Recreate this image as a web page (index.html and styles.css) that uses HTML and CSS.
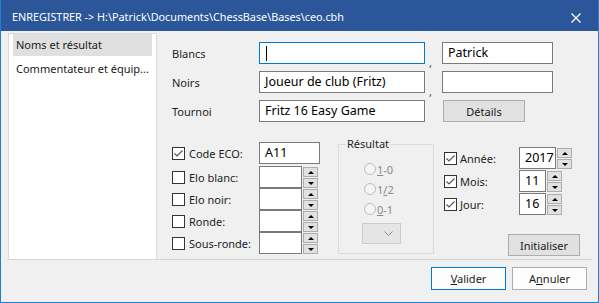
FILE: index.html
```html
<!DOCTYPE html>
<html lang="fr">
<head>
  <meta charset="UTF-8">
  <title>Enregistrer</title>
  <link rel="stylesheet" href="styles.css">
</head>
<body>
  <div class="window">
    <div class="titlebar">
      <span class="title">ENREGISTRER -&gt; H:\Patrick\Documents\ChessBase\Bases\ceo.cbh</span>
      <svg class="close" width="10" height="10" viewBox="0 0 10 10">
        <path d="M0.5 0.5 L9.5 9.5 M9.5 0.5 L0.5 9.5" stroke="#fff" stroke-width="1.3"/>
      </svg>
    </div>

    <div class="main">
      <ul class="nav">
        <li class="active">Noms et résultat</li>
        <li>Commentateur et équip...</li>
      </ul>

      <div class="form">
        <div class="names">
          <span class="label">Blancs</span>
          <div class="field focus"><span class="caret"></span></div>
          <span class="comma">,</span>
          <div class="field short">Patrick</div>

          <span class="label">Noirs</span>
          <div class="field">Joueur de club (Fritz)</div>
          <span class="comma">,</span>
          <div class="field short"></div>

          <span class="label">Tournoi</span>
          <div class="field">Fritz 16 Easy Game</div>
          <span></span>
          <button class="btn details">Détails</button>
        </div>

        <div class="lower">
          <div class="checks">
            <div class="row eco-row">
              <span class="check on"></span><span class="label">Code ECO:</span>
              <div class="field eco">A11</div>
            </div>
            <div class="row">
              <span class="check"></span><span class="label">Elo blanc:</span>
              <div class="spin"><div class="field"></div><div class="arrows"><span class="up"></span><span class="down"></span></div></div>
            </div>
            <div class="row">
              <span class="check"></span><span class="label">Elo noir:</span>
              <div class="spin"><div class="field"></div><div class="arrows"><span class="up"></span><span class="down"></span></div></div>
            </div>
            <div class="row">
              <span class="check"></span><span class="label">Ronde:</span>
              <div class="spin"><div class="field"></div><div class="arrows"><span class="up"></span><span class="down"></span></div></div>
            </div>
            <div class="row">
              <span class="check"></span><span class="label">Sous-ronde:</span>
              <div class="spin"><div class="field"></div><div class="arrows"><span class="up"></span><span class="down"></span></div></div>
            </div>
          </div>

          <fieldset class="result">
            <legend>Résultat</legend>
            <div class="radio"><span class="dot"></span><span><u>1</u>-0</span></div>
            <div class="radio"><span class="dot"></span><span>1<u>/</u>2</span></div>
            <div class="radio"><span class="dot"></span><span><u>0</u>-1</span></div>
            <div class="combo">
              <svg width="9" height="5" viewBox="0 0 9 5"><path d="M0.5 0.5 L4.5 4.5 L8.5 0.5" fill="none" stroke="#8a8a8a"/></svg>
            </div>
          </fieldset>

          <div class="dates">
            <div class="row">
              <span class="check on"></span><span class="label">Année:</span>
              <div class="spin"><div class="field year">2017</div><div class="arrows"><span class="up"></span><span class="down"></span></div></div>
            </div>
            <div class="row">
              <span class="check on"></span><span class="label">Mois:</span>
              <div class="spin"><div class="field day">11</div><div class="arrows"><span class="up"></span><span class="down"></span></div></div>
            </div>
            <div class="row">
              <span class="check on"></span><span class="label">Jour:</span>
              <div class="spin"><div class="field day">16</div><div class="arrows"><span class="up"></span><span class="down"></span></div></div>
            </div>
            <button class="btn reset">Initialiser</button>
          </div>
        </div>
      </div>
    </div>

    <div class="footer">
      <button class="btn action primary"><u>V</u>alider</button>
      <button class="btn action">A<u>n</u>nuler</button>
    </div>
  </div>
</body>
</html>
```

FILE: styles.css
```css
body {
  margin: 0;
  font-family: "Noto Sans", "Liberation Sans", sans-serif;
  font-size: 11px;
  color: #1a1a1a;
}
.window {
  width: 599px;
  height: 303px;
  box-sizing: border-box;
  border: 1px solid #1f7fd6;
  border-top: none;
  background-color: #f0f0f0;
  overflow: hidden;
}
.titlebar {
  height: 31px;
  background-color: #2b579a;
  color: #fff;
  display: flex;
  align-items: center;
  justify-content: space-between;
  padding: 0 17px 0 11px;
  font-size: 10.8px;
}
.title {
  margin-top: 1px;
}
.close {
  margin-top: 4px;
}
.main {
  margin: 0 6px;
  height: 228px;
  display: flex;
  border-bottom: 1px solid #d5d5d5;
}
.nav {
  list-style: none;
  margin: 2px 0 0 1px;
  padding: 0;
  width: 149px;
  box-sizing: border-box;
  background-color: #fff;
  border: 1px solid #dadada;
  border-bottom: none;
}
.nav li {
  height: 22px;
  line-height: 22px;
  margin: 0 4px 2px;
  padding-left: 3px;
}
.nav li.active {
  background-color: #e0e0e0;
}
.form {
  padding: 11px 0 0 15px;
}
.names {
  display: grid;
  grid-template-columns: 87px 166px 17px 111px;
  grid-auto-rows: 22px;
  row-gap: 7px;
}
.label {
  align-self: center;
  color: #1e1e1e;
}
.field {
  box-sizing: border-box;
  height: 22px;
  border: 1px solid #7a7a7a;
  background-color: #fff;
  padding-left: 5px;
  font-size: 12.5px;
  line-height: 20px;
  color: #000;
}
.field.focus {
  border-color: #0078d7;
  padding-left: 6px;
  display: flex;
  align-items: center;
}
.caret {
  width: 1px;
  height: 15px;
  background-color: #000;
}
.comma {
  align-self: end;
  margin-left: 4px;
  margin-bottom: -6px;
  color: #2a4a7a;
  font-size: 11px;
}
.btn {
  box-sizing: border-box;
  font-family: inherit;
  font-size: 11px;
  color: #1a1a1a;
  background-color: #e1e1e1;
  border: 1px solid #adadad;
  padding: 0;
}
.details {
  width: 82px;
  height: 22px;
  margin-left: 1px;
}
.lower {
  display: flex;
  margin-top: 15px;
}
.checks {
  width: 147px;
  margin-top: 5px;
}
.row {
  display: grid;
  grid-template-columns: 17px 70px auto;
  height: 22px;
  align-items: center;
}
.eco-row {
  margin-bottom: 2px;
}
.check {
  box-sizing: border-box;
  width: 13px;
  height: 13px;
  border: 1px solid #333;
  background-color: #fff;
}
.check.on {
  background: #fff url("data:image/svg+xml;utf8,<svg xmlns='http://www.w3.org/2000/svg' width='11' height='11'><path d='M1.5 5.5 L4 8 L9.5 2.5' fill='none' stroke='%23555' stroke-width='1.2'/></svg>") no-repeat center;
}
.eco {
  width: 61px;
}
.spin {
  display: flex;
  gap: 1px;
  height: 22px;
}
.spin .field {
  width: 43px;
}
.spin .field.year {
  width: 37px;
}
.spin .field.day {
  width: 27px;
}
.arrows {
  display: flex;
  flex-direction: column;
  gap: 1px;
  padding-top: 1px;
}
.arrows span {
  box-sizing: border-box;
  width: 15px;
  height: 10px;
  background-color: #e1e1e1;
  border: 1px solid #adadad;
  display: flex;
  align-items: center;
  justify-content: center;
}
.arrows span::after {
  content: "";
  border-left: 3px solid transparent;
  border-right: 3px solid transparent;
}
.arrows .up::after {
  border-bottom: 3px solid #000;
}
.arrows .down::after {
  border-top: 3px solid #000;
}
.result {
  box-sizing: border-box;
  width: 96px;
  height: 117px;
  margin: 0 0 0 19px;
  padding: 8px 0 0 25px;
  border: 1px solid #dcdcdc;
}
.result legend {
  margin-left: -18px;
  padding: 0 1px;
  color: #1e1e1e;
  line-height: 14px;
}
.radio {
  display: flex;
  align-items: center;
  height: 20px;
  color: #8a8a8a;
  gap: 1px;
}
.dot {
  box-sizing: border-box;
  width: 12px;
  height: 12px;
  border: 1px solid #bcbcbc;
  border-radius: 50%;
  background-color: #f5f5f5;
}
.combo {
  box-sizing: border-box;
  width: 39px;
  height: 21px;
  margin: 4px 0 0 -2px;
  background-color: #e5e5e5;
  border: 1px solid #cccccc;
  display: flex;
  align-items: center;
  justify-content: flex-end;
  padding-right: 7px;
}
.dates {
  width: 136px;
  margin: 10px 0 0 10px;
  display: flex;
  flex-direction: column;
  gap: 1px;
}
.dates .row {
  grid-template-columns: 16px 59px auto;
}
.reset {
  align-self: flex-end;
  width: 72px;
  height: 22px;
  margin-top: 18px;
}
.footer {
  display: flex;
  justify-content: flex-end;
  gap: 6px;
  padding: 7px 11px 0 0;
}
.action {
  width: 75px;
  height: 23px;
  background-color: #fdfdfd;
  border-color: #adadad;
}
.action.primary {
  border-color: #0078d7;
}
```
